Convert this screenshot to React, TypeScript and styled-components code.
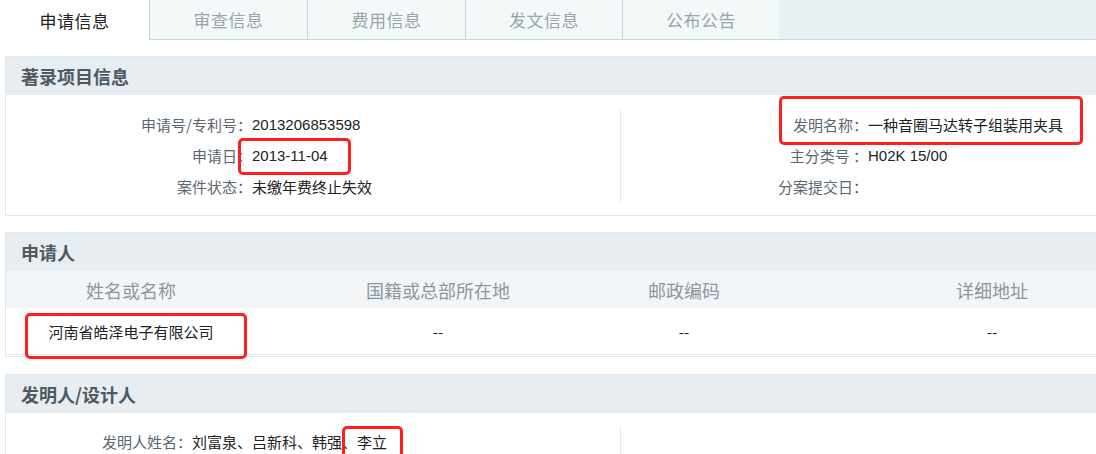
import React from "react";
import styled, { createGlobalStyle } from "styled-components";

const Global = createGlobalStyle`
  html, body { margin: 0; padding: 0; background: #fff; }
  body { font-family: "Noto Sans CJK SC", "Liberation Sans", sans-serif; overflow: hidden; }
  * { box-sizing: border-box; }
`;

const Page = styled.div`
  position: relative;
  width: 1096px;
  height: 454px;
  overflow: hidden;
`;

const TabBar = styled.div`
  display: flex;
  height: 40px;
  background: #e8f1f4;
  border-bottom: 1px solid #c8d5dd;
`;

const Tab = styled.div<{ $active?: boolean; $w: number }>`
  width: ${(p) => p.$w}px;
  height: ${(p) => (p.$active ? "40px" : "39px")};
  display: flex;
  align-items: center;
  justify-content: center;
  font-size: 17px;
  letter-spacing: 0.5px;
  color: ${(p) => (p.$active ? "#222" : "#9aa4ab")};
  background: ${(p) => (p.$active ? "#fff" : "#f3f8f9")};
  border-left: ${(p) => (p.$active ? "none" : "1px solid #c8d5dd")};
`;

const Section = styled.section<{ $mt: number }>`
  margin: ${(p) => p.$mt}px 0 0 5px;
  width: 1232px;
  border: 1px solid #e1e7eb;
`;

const Header = styled.div`
  height: 38px;
  display: flex;
  align-items: center;
  padding-left: 15px;
  background: #e8edf1;
  font-size: 18px;
  font-weight: bold;
  color: #4e5962;
`;

const InfoBody = styled.div<{ $pt: number; $pb: number }>`
  display: grid;
  grid-template-columns: 615px 1fr;
  padding: ${(p) => p.$pt}px 0 ${(p) => p.$pb}px;
`;

const Column = styled.div<{ $divider?: boolean }>`
  display: flex;
  flex-direction: column;
  border-right: ${(p) => (p.$divider ? "1px solid #e3e8ec" : "none")};
`;

const Row = styled.div<{ $labelW: number }>`
  display: grid;
  grid-template-columns: ${(p) => p.$labelW}px 1fr;
  height: 31px;
  align-items: center;
  font-size: 15px;
  white-space: nowrap;
`;

const Label = styled.span`
  text-align: right;
  color: #5b6670;
`;

const Value = styled.span`
  color: #222;
  font-family: "Liberation Sans", "Noto Sans CJK SC", sans-serif;
`;

const TableGrid = styled.div`
  display: grid;
  grid-template-columns: 250px 364px 128px 1fr;
`;

const HeadCell = styled.div`
  height: 37px;
  display: flex;
  align-items: center;
  justify-content: center;
  background: #f2f6f8;
  font-size: 18px;
  color: #8d969e;
`;

const DataCell = styled.div`
  height: 47px;
  display: flex;
  align-items: center;
  justify-content: center;
  font-size: 15px;
  color: #222;
  border-bottom: 1px solid #e6ebee;
  margin-bottom: 1px;
`;

const Mark = styled.div`
  position: absolute;
  border: 3px solid #ff1f1f;
  border-radius: 5px;
  pointer-events: none;
`;

const marks = [
  { l: 779, t: 96, w: 304, h: 49 },
  { l: 238, t: 138, w: 113, h: 37 },
  { l: 25, t: 313, w: 222, h: 46 },
  { l: 342, t: 426, w: 61, h: 32 },
];

export default function App() {
  const tabs = [
    { t: "申请信息", w: 149, a: true },
    { t: "审查信息", w: 158 },
    { t: "费用信息", w: 158 },
    { t: "发文信息", w: 157 },
    { t: "公布公告", w: 157 },
  ];
  return (
    <Page>
      <Global />
      <TabBar>
        {tabs.map((x) => (
          <Tab key={x.t} $w={x.w} $active={x.a}>
            {x.t}
          </Tab>
        ))}
      </TabBar>

      <Section $mt={16}>
        <Header>著录项目信息</Header>
        <InfoBody $pt={14} $pb={13}>
          <Column $divider>
            <Row $labelW={246}>
              <Label>申请号/专利号：</Label>
              <Value>2013206853598</Value>
            </Row>
            <Row $labelW={246}>
              <Label>申请日：</Label>
              <Value>2013-11-04</Value>
            </Row>
            <Row $labelW={246}>
              <Label>案件状态：</Label>
              <Value>未缴年费终止失效</Value>
            </Row>
          </Column>
          <Column>
            <Row $labelW={247}>
              <Label>发明名称：</Label>
              <Value>一种音圈马达转子组装用夹具</Value>
            </Row>
            <Row $labelW={247}>
              <Label>主分类号 ：</Label>
              <Value>H02K 15/00</Value>
            </Row>
            <Row $labelW={247}>
              <Label>分案提交日：</Label>
              <Value></Value>
            </Row>
          </Column>
        </InfoBody>
      </Section>

      <Section $mt={16}>
        <Header>申请人</Header>
        <TableGrid>
          <HeadCell>姓名或名称</HeadCell>
          <HeadCell>国籍或总部所在地</HeadCell>
          <HeadCell>邮政编码</HeadCell>
          <HeadCell>详细地址</HeadCell>
          <DataCell>河南省皓泽电子有限公司</DataCell>
          <DataCell>--</DataCell>
          <DataCell>--</DataCell>
          <DataCell>--</DataCell>
        </TableGrid>
      </Section>

      <Section $mt={17}>
        <Header>发明人/设计人</Header>
        <InfoBody $pt={13} $pb={13}>
          <Column $divider>
            <Row $labelW={186}>
              <Label>发明人姓名：</Label>
              <Value>刘富泉、吕新科、韩强、李立</Value>
            </Row>
          </Column>
          <Column />
        </InfoBody>
      </Section>

      {marks.map((m, i) => (
        <Mark key={i} style={{ left: m.l, top: m.t, width: m.w, height: m.h }} />
      ))}
    </Page>
  );
}
